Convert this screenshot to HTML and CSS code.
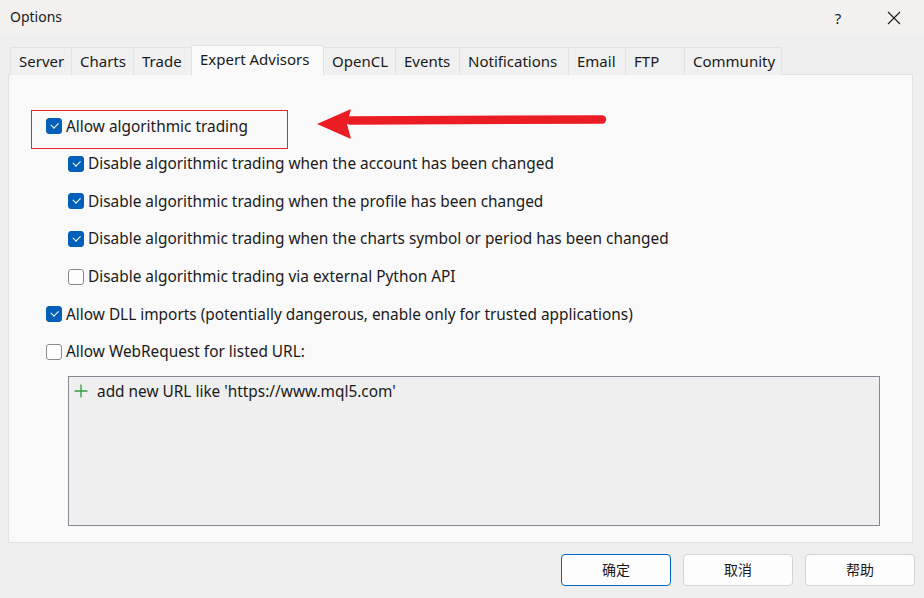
FILE: index.html
```html
<!DOCTYPE html>
<html>
<head>
<meta charset="utf-8">
<title>Options</title>
<link rel="stylesheet" href="styles.css">
</head>
<body>
<div class="window">
  <div class="titlebar">
    <span class="title">Options</span>
    <span class="tb-btn">?</span>
    <span class="tb-btn close">
      <svg width="14" height="14" viewBox="0 0 14 14"><path d="M1 1 L13 13 M13 1 L1 13" stroke="#1a1a1a" stroke-width="1.1" fill="none"/></svg>
    </span>
  </div>
  <div class="dialog">
    <div class="tabs">
      <div class="tab t-server">Server</div>
      <div class="tab t-charts">Charts</div>
      <div class="tab t-trade">Trade</div>
      <div class="tab active t-ea">Expert Advisors</div>
      <div class="tab t-opencl">OpenCL</div>
      <div class="tab t-events">Events</div>
      <div class="tab t-notif">Notifications</div>
      <div class="tab t-email">Email</div>
      <div class="tab t-ftp">FTP</div>
      <div class="tab t-comm">Community</div>
    </div>
    <div class="panel">
      <div class="highlight"></div>
      <svg class="arrow" width="300" height="34" viewBox="0 0 300 34">
        <path d="M33 12.5 L285 11.5" stroke="#ec1c24" stroke-width="8.5" stroke-linecap="round" fill="none"/>
        <path d="M0 16 L34 1 L30 16 L34 31 Z" fill="#ec1c24"/>
      </svg>
      <label class="row lvl1 first"><span class="cb on"></span>Allow algorithmic trading</label>
      <label class="row lvl2"><span class="cb on"></span>Disable algorithmic trading when the account has been changed</label>
      <label class="row lvl2"><span class="cb on"></span>Disable algorithmic trading when the profile has been changed</label>
      <label class="row lvl2"><span class="cb on"></span>Disable algorithmic trading when the charts symbol or period has been changed</label>
      <label class="row lvl2"><span class="cb"></span>Disable algorithmic trading via external Python API</label>
      <label class="row lvl1 dll"><span class="cb on"></span>Allow DLL imports (potentially dangerous, enable only for trusted applications)</label>
      <label class="row lvl1"><span class="cb"></span>Allow WebRequest for listed URL:</label>
      <div class="urlbox">
        <div class="urlrow">
          <svg class="plus" width="14" height="14" viewBox="0 0 14 14"><path d="M7 0.5 V13.5 M0.5 7 H13.5" stroke="#2f9e44" stroke-width="1.3" fill="none"/></svg>
          <span>add new URL like 'https://www.mql5.com'</span>
        </div>
      </div>
    </div>
    <div class="footer">
      <button class="btn default">确定</button>
      <button class="btn">取消</button>
      <button class="btn">帮助</button>
    </div>
  </div>
</div>
</body>
</html>
```
FILE: styles.css
```css
* { box-sizing: border-box; }
html, body { margin: 0; padding: 0; }
body {
  width: 924px;
  height: 598px;
  overflow: hidden;
  background: #efefef;
  font-family: "Noto Sans", "Open Sans", sans-serif;
  color: #1a1a1a;
}
.window { width: 924px; height: 598px; }
.titlebar {
  height: 35px;
  background: #f3f0f0;
  display: flex;
  align-items: center;
  padding: 0 2px 0 10px;
}
.title {
  flex: 1;
  font-size: 14px;
  margin-top: -2px;
}
.tb-btn {
  width: 56px;
  height: 35px;
  display: flex;
  align-items: center;
  justify-content: center;
  font-size: 15px;
}
.dialog { padding: 12px 11px 0 8px; }
.tabs {
  display: flex;
  align-items: flex-end;
  padding-left: 2px;
  height: 28px;
  position: relative;
  z-index: 2;
}
.tab {
  height: 28px;
  border: 1px solid #e2e2e2;
  border-bottom: none;
  border-left: none;
  background: #f0f0f0;
  font-size: 15px;
  padding: 1px 0 0 8px;
  line-height: 24px;
  white-space: nowrap;
}
.tab:first-child { border-left: 1px solid #e2e2e2; }
.tab.active {
  height: 31px;
  margin-bottom: -1px;
  background: #f9f9f9;
  border-left: 1px solid #e2e2e2;
  margin-left: -1px;
  padding-top: 0;
  line-height: 26px;
}
.t-server { width: 62px; }
.t-charts { width: 62px; }
.t-trade { width: 58px; }
.t-ea { width: 133px; }
.t-opencl { width: 72px; }
.t-events { width: 64px; }
.t-notif { width: 109px; }
.t-email { width: 57px; }
.t-ftp { width: 59px; }
.t-comm { width: 97px; }

.panel {
  position: relative;
  height: 469px;
  margin-top: -1px;
  background: #f9f9f9;
  border: 1px solid #e2e2e2;
  padding: 42px 0 0 37px;
}
.highlight {
  position: absolute;
  left: 22px;
  top: 35px;
  width: 257px;
  height: 39px;
  border: 1px solid #e8212b;
}
.arrow {
  position: absolute;
  left: 308px;
  top: 33px;
}
.row {
  display: flex;
  align-items: center;
  height: 18px;
  font-size: 15.4px;
  white-space: nowrap;
  margin-bottom: 19.7px;
}
.row.lvl2 { margin-left: 22px; }
.row.first { margin-bottom: 19.5px; }
.row.dll { margin-bottom: 19.5px; }
.cb {
  width: 16px;
  height: 16px;
  border-radius: 3px;
  border: 1px solid #8a8a8a;
  background: #fdfdfd;
  margin-right: 4px;
  flex: none;
  position: relative;
}
.cb.on {
  background: #005fb8;
  border-color: #005fb8;
}
.cb.on::after {
  content: "";
  position: absolute;
  left: 4px;
  top: 3px;
  width: 6px;
  height: 3.5px;
  border-left: 1.2px solid #fff;
  border-bottom: 1.2px solid #fff;
  transform: rotate(-45deg);
}
.urlbox {
  margin: -4px 0 0 22px;
  width: 812px;
  height: 150px;
  border: 1px solid #858993;
  background: #efefef;
  padding: 5px 0 0 5px;
}
.urlrow {
  display: flex;
  align-items: center;
  font-size: 15.4px;
  height: 18px;
}
.plus { margin-right: 9px; }
.footer {
  display: flex;
  justify-content: flex-end;
  gap: 12px;
  padding: 11px 0 0 0;
  margin-right: -2px;
}
.btn {
  width: 110px;
  height: 32px;
  border: 1px solid #d4d4d4;
  border-radius: 4px;
  background: #fdfdfd;
  font-family: "Noto Sans CJK SC", sans-serif;
  font-size: 14px;
  line-height: 28px;
  color: #1a1a1a;
  padding: 0 0 2px 0;
}
.btn.default { border-color: #0067c0; }
```
